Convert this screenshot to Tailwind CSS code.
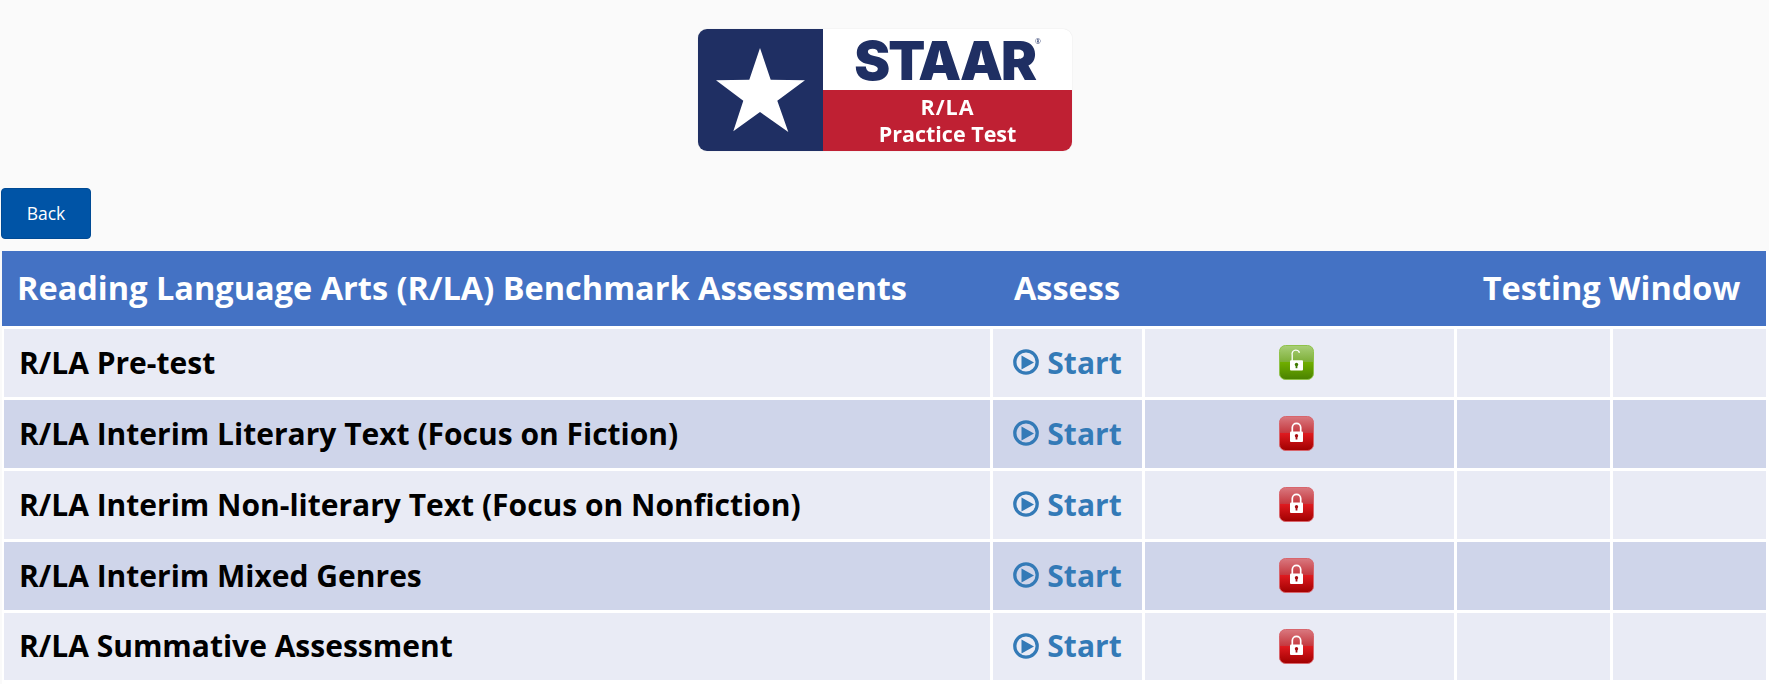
<!DOCTYPE html>
<html><head><meta charset="utf-8"><script src="https://cdn.jsdelivr.net/npm/@tailwindcss/browser@4"></script></head>
<body class="bg-[#fafafa] font-['Open_Sans',sans-serif] overflow-hidden">
<svg class="absolute w-0 h-0"><defs>
<linearGradient id="r" x1="0" y1="0" x2="0" y2="1"><stop offset="0" stop-color="#d9787f"/><stop offset=".47" stop-color="#c53a40"/><stop offset=".5" stop-color="#de1a1f"/><stop offset="1" stop-color="#a00000"/></linearGradient>
<linearGradient id="g" x1="0" y1="0" x2="0" y2="1"><stop offset="0" stop-color="#a9cf78"/><stop offset=".47" stop-color="#7fb03a"/><stop offset=".5" stop-color="#6fae00"/><stop offset="1" stop-color="#4a8200"/></linearGradient>
<symbol id="closed" viewBox="0 0 35 35"><rect x=".5" y=".5" width="34" height="34" rx="6" fill="url(#r)" stroke="#d8656c"/><path d="M13.300 16v-4.500a4.200 4.200 0 0 1 8.400 0v4.500" fill="none" stroke="#fff" stroke-width="1.700"/><rect x="11" y="15.500" width="13" height="10.500" rx="1" fill="#fff"/><circle cx="17.500" cy="19.800" r="1.700" fill="#a80c10"/><rect x="16.600" y="20" width="1.800" height="3.500" fill="#a80c10"/></symbol>
<symbol id="open" viewBox="0 0 35 35"><rect x=".5" y=".5" width="34" height="34" rx="6" fill="url(#g)" stroke="#8fc24a"/><path d="M13.200 16v-6a3.800 3.800 0 0 1 7.300-2.200" fill="none" stroke="#fff" stroke-width="1.300"/><rect x="11" y="15.300" width="13" height="10.200" rx="1" fill="#fff"/><circle cx="17.500" cy="19.500" r="1.700" fill="#3f7a00"/><rect x="16.600" y="19.700" width="1.800" height="3.500" fill="#3f7a00"/></symbol>
<symbol id="play" viewBox="0 0 26 26"><circle cx="13" cy="13" r="11.200" fill="none" stroke="#337ab7" stroke-width="3.300"/><path d="M8.500 6.500 21 13.500 8.500 20.500z" fill="#337ab7"/></symbol>
</defs></svg>

<header class="h-[188px] flex justify-center pt-[29px]">
  <div class="w-[374px] h-[122px] ml-[1px] rounded-[9px] overflow-hidden flex shadow-[0_0_1px_#ccc] blur-[0.3px]">
    <div class="w-[125px] bg-[#1f2f63] flex items-center justify-center">
      <svg width="89" height="84" viewBox="0 0 89 84"><polygon points="44,0 54.700,31.700 89,32.300 61.300,52.700 72.300,84 44,64 17.300,83.300 27.300,52.700 0,32.300 33.300,31.700" fill="#fff"/></svg>
    </div>
    <div class="flex-1 flex flex-col">
      <div class="h-[61px] bg-white flex justify-center items-start">
        <span class="font-['Inter',sans-serif] font-black text-[54px] leading-[64px] text-[#1f2f63] tracking-[-2px]">STAAR</span>
        <span class="text-[#1f2f63] text-[7px] leading-[7px] mt-[9px]">®</span>
      </div>
      <div class="flex-1 bg-[#bf2033] text-white text-center font-bold text-[21.5px] leading-[27px] pt-[3px]">
        <div class="tracking-[1px]">R/LA</div><div>Practice Test</div>
      </div>
    </div>
  </div>
</header>

<button class="block ml-[1px] w-[90px] h-[51px] bg-[#0054a6] border border-[#004a94] rounded-[4px] text-white text-[17.5px]">Back</button>

<main class="mt-[12px] ml-[2px] w-[1767px] bg-white h-[433px]">
  <div class="w-[1764px] h-[75px] bg-[#4472c4] grid grid-cols-[989px_152px_314px_1fr] items-center text-white font-bold text-[32.5px]">
    <div class="pl-[15px]">Reading Language Arts (R/LA) Benchmark Assessments</div>
    <div class="text-center">Assess</div>
    <div></div>
    <div class="text-center">Testing Window</div>
  </div>
  <div class="mt-[3px] ml-[2px] w-[1762px] grid grid-cols-[986px_149px_309px_153px_153px] grid-rows-[68px_68px_68px_68px_67px] gap-[3px] text-[30px] font-bold text-black">
    <div class="bg-[#e9ebf5] flex items-center pl-[15px] pb-[2px]">R/LA Pre-test</div>
    <div class="bg-[#e9ebf5] flex items-center justify-center gap-[8px] text-[#337ab7] pb-[2px]"><svg class="w-[26px] h-[26px]"><use href="#play"/></svg>Start</div>
    <div class="bg-[#e9ebf5] flex items-center justify-center"><svg class="w-[35px] h-[35px] mr-[6px] mb-[1px]"><use href="#open"/></svg></div>
    <div class="bg-[#e9ebf5]"></div><div class="bg-[#e9ebf5]"></div>

    <div class="bg-[#cfd5ea] flex items-center pl-[15px] pb-[2px]">R/LA Interim Literary Text (Focus on Fiction)</div>
    <div class="bg-[#cfd5ea] flex items-center justify-center gap-[8px] text-[#337ab7] pb-[2px]"><svg class="w-[26px] h-[26px]"><use href="#play"/></svg>Start</div>
    <div class="bg-[#cfd5ea] flex items-center justify-center"><svg class="w-[35px] h-[35px] mr-[6px] mb-[1px]"><use href="#closed"/></svg></div>
    <div class="bg-[#cfd5ea]"></div><div class="bg-[#cfd5ea]"></div>

    <div class="bg-[#e9ebf5] flex items-center pl-[15px] pb-[2px]">R/LA Interim Non-literary Text (Focus on Nonfiction)</div>
    <div class="bg-[#e9ebf5] flex items-center justify-center gap-[8px] text-[#337ab7] pb-[2px]"><svg class="w-[26px] h-[26px]"><use href="#play"/></svg>Start</div>
    <div class="bg-[#e9ebf5] flex items-center justify-center"><svg class="w-[35px] h-[35px] mr-[6px] mb-[1px]"><use href="#closed"/></svg></div>
    <div class="bg-[#e9ebf5]"></div><div class="bg-[#e9ebf5]"></div>

    <div class="bg-[#cfd5ea] flex items-center pl-[15px] pb-[2px]">R/LA Interim Mixed Genres</div>
    <div class="bg-[#cfd5ea] flex items-center justify-center gap-[8px] text-[#337ab7] pb-[2px]"><svg class="w-[26px] h-[26px]"><use href="#play"/></svg>Start</div>
    <div class="bg-[#cfd5ea] flex items-center justify-center"><svg class="w-[35px] h-[35px] mr-[6px] mb-[1px]"><use href="#closed"/></svg></div>
    <div class="bg-[#cfd5ea]"></div><div class="bg-[#cfd5ea]"></div>

    <div class="bg-[#e9ebf5] flex items-center pl-[15px] pb-[2px]">R/LA Summative Assessment</div>
    <div class="bg-[#e9ebf5] flex items-center justify-center gap-[8px] text-[#337ab7] pb-[2px]"><svg class="w-[26px] h-[26px]"><use href="#play"/></svg>Start</div>
    <div class="bg-[#e9ebf5] flex items-center justify-center"><svg class="w-[35px] h-[35px] mr-[6px] mb-[1px]"><use href="#closed"/></svg></div>
    <div class="bg-[#e9ebf5]"></div><div class="bg-[#e9ebf5]"></div>
  </div>
</main>
</body></html>
